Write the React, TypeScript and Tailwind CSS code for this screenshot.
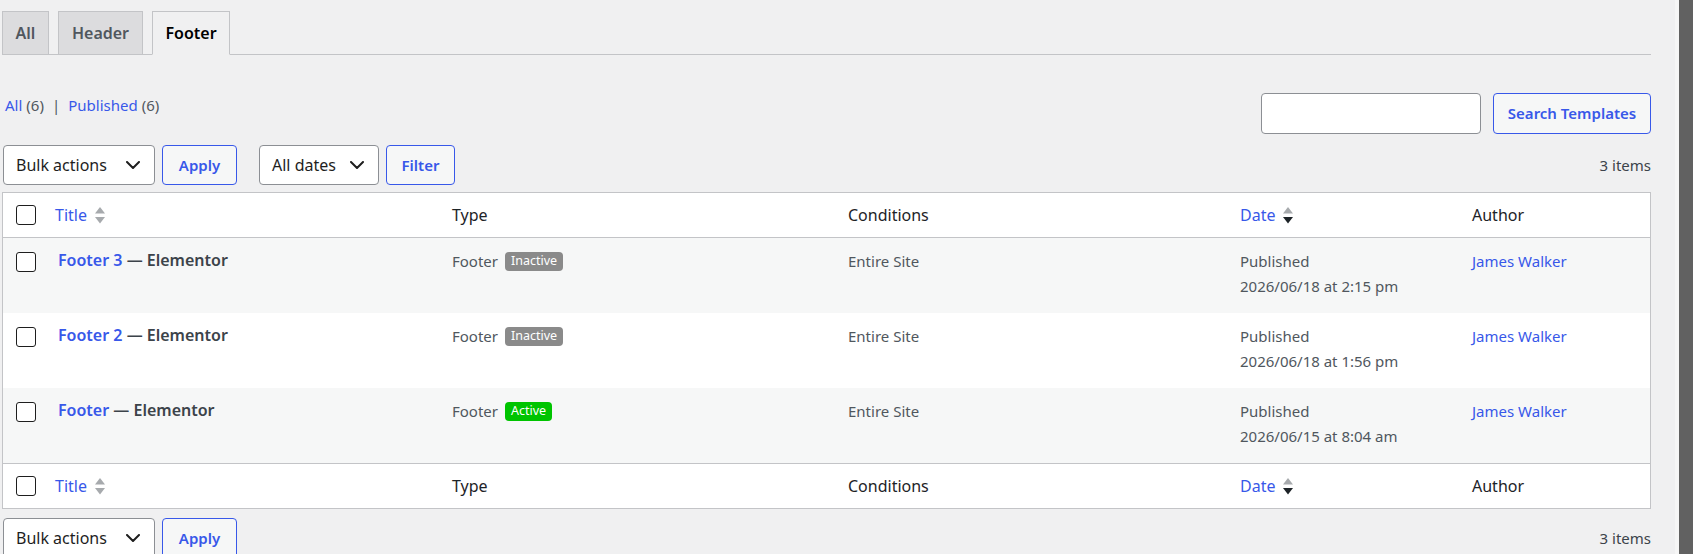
import React from "react";

type Row = {
  title: string;
  active: boolean;
  date: string;
  shaded: boolean;
};

const ROWS: Row[] = [
  { title: "Footer 3", active: false, date: "2026/06/18 at 2:15 pm", shaded: true },
  { title: "Footer 2", active: false, date: "2026/06/18 at 1:56 pm", shaded: false },
  { title: "Footer", active: true, date: "2026/06/15 at 8:04 am", shaded: true },
];

const COLS = "grid grid-cols-[41px_397px_396px_392px_232px_1fr]";

function Checkbox() {
  return <span className="block h-[20px] w-[20px] rounded-[3px] border border-[#1e1e1e] bg-white" />;
}

function SortArrows({ desc }: { desc?: boolean }) {
  return (
    <svg width="10" height="17" viewBox="0 0 10 17" className="ml-[8px]">
      <polygon points="5,0 10,6.5 0,6.5" fill="#a7aaad" />
      <polygon points="0,10 10,10 5,16.5" fill={desc ? "#1d2327" : "#a7aaad"} />
    </svg>
  );
}

function Chevron() {
  return (
    <svg width="14" height="8" viewBox="0 0 14 8" fill="none">
      <path d="M1 1l6 6 6-6" stroke="#1e1e1e" strokeWidth="2" strokeLinecap="round" strokeLinejoin="round" />
    </svg>
  );
}

function Select({ label, width }: { label: string; width: string }) {
  return (
    <div
      className={`flex h-[40px] ${width} items-center justify-between rounded-[4px] border border-[#8c8f94] bg-white pl-[12px] pr-[14px] text-[16px] text-[#1e1e1e]`}
    >
      <span>{label}</span>
      <Chevron />
    </div>
  );
}

function Button({ label, width }: { label: string; width: string }) {
  return (
    <div
      className={`flex h-[40px] ${width} items-center justify-center rounded-[4px] border border-[#3858e9] bg-[#f6f7f7] text-[15px] font-semibold text-[#3858e9]`}
    >
      {label}
    </div>
  );
}

function HeadRow({ top }: { top?: boolean }) {
  return (
    <div
      className={`${COLS} h-[45px] items-center text-[16px] text-[#1d2327] ${
        top ? "border-b" : "border-t"
      } border-[#c3c4c7]`}
    >
      <div className="pl-[13px]">
        <Checkbox />
      </div>
      <div className="flex items-center pl-[11px] text-[#3858e9]">
        Title
        <SortArrows />
      </div>
      <div className="pl-[11px]">Type</div>
      <div className="pl-[11px]">Conditions</div>
      <div className="flex items-center pl-[11px] text-[#3858e9]">
        Date
        <SortArrows desc />
      </div>
      <div className="pl-[11px]">Author</div>
    </div>
  );
}

function TemplateRow({ row }: { row: Row }) {
  return (
    <div
      className={`${COLS} h-[75px] items-start text-[15px] leading-[25px] text-[#50575e] ${
        row.shaded ? "bg-[#f6f7f7]" : "bg-white"
      }`}
    >
      <div className="pl-[13px] pt-[14px]">
        <Checkbox />
      </div>
      <div className="pl-[14px] pt-[10px] text-[16px] font-semibold text-[#3c434a]">
        <span className="text-[#3858e9]">{row.title}</span> — Elementor
      </div>
      <div className="flex items-center pl-[11px] pt-[11px]">
        <span>Footer</span>
        <span
          className={`ml-[7px] flex h-[19px] items-center rounded-[4px] px-[6px] text-[12.5px] leading-none text-white ${
            row.active ? "bg-[#00c400]" : "bg-[#8a8a8a]"
          }`}
        >
          {row.active ? "Active" : "Inactive"}
        </span>
      </div>
      <div className="pl-[11px] pt-[11px]">Entire Site</div>
      <div className="pl-[11px] pt-[11px]">
        <div>Published</div>
        <div>{row.date}</div>
      </div>
      <div className="pl-[11px] pt-[11px] text-[#3858e9]">James Walker</div>
    </div>
  );
}

export default function App() {
  return (
    <div className="flex h-[554px] w-full overflow-hidden bg-[#f0f0f1] font-['Noto_Sans','Open_Sans',sans-serif]">
      <div className="min-w-0 flex-1 pl-[2px] pr-[24px]">
        {/* tabs */}
        <div className="mt-[11px] flex h-[44px] items-end gap-[9px] border-b border-[#c3c4c7] text-[16px] font-semibold">
          <div className="-mb-px flex h-[44px] w-[47px] items-center justify-center border border-[#c3c4c7] bg-[#dcdcde] text-[#50575e]">
            All
          </div>
          <div className="-mb-px flex h-[44px] w-[85px] items-center justify-center border border-[#c3c4c7] bg-[#dcdcde] text-[#50575e]">
            Header
          </div>
          <div className="-mb-px flex h-[44px] w-[78px] items-center justify-center border border-[#c3c4c7] border-b-[#f0f0f1] bg-[#f0f0f1] text-black">
            Footer
          </div>
        </div>

        {/* views + search */}
        <div className="mt-[38px] flex items-start justify-between">
          <div className="mt-[1px] flex items-center pl-[3px] text-[15px] text-[#50575e]">
            <span className="text-[#3858e9]">All</span>
            <span className="ml-[4px]">(6)</span>
            <span className="mx-[8px] text-[#50575e]">|</span>
            <span className="text-[#3858e9]">Published</span>
            <span className="ml-[4px]">(6)</span>
          </div>
          <div className="flex gap-[12px]">
            <div className="h-[41px] w-[220px] rounded-[4px] border border-[#8c8f94] bg-white" />
            <div className="flex h-[41px] w-[158px] items-center justify-center rounded-[4px] border border-[#3858e9] bg-[#f6f7f7] text-[15px] font-semibold text-[#3858e9]">
              Search Templates
            </div>
          </div>
        </div>

        {/* top tablenav */}
        <div className="mt-[11px] flex items-center justify-between pl-[1px]">
          <div className="flex items-center">
            <Select label="Bulk actions" width="w-[152px]" />
            <div className="ml-[7px]">
              <Button label="Apply" width="w-[75px]" />
            </div>
            <div className="ml-[22px]">
              <Select label="All dates" width="w-[120px]" />
            </div>
            <div className="ml-[7px]">
              <Button label="Filter" width="w-[69px]" />
            </div>
          </div>
          <span className="text-[15px] text-[#3c434a]">3 items</span>
        </div>

        {/* table */}
        <div className="mt-[7px] border border-[#c3c4c7] bg-white">
          <HeadRow top />
          {ROWS.map((r) => (
            <TemplateRow key={r.title} row={r} />
          ))}
          <HeadRow />
        </div>

        {/* bottom tablenav */}
        <div className="mt-[9px] flex items-center justify-between pl-[1px]">
          <div className="flex items-center">
            <Select label="Bulk actions" width="w-[152px]" />
            <div className="ml-[7px]">
              <Button label="Apply" width="w-[75px]" />
            </div>
          </div>
          <span className="text-[15px] text-[#3c434a]">3 items</span>
        </div>
      </div>
      <div className="w-[4px] bg-[#f6f6f6]" />
      <div className="w-[14px] bg-[#616161]" />
    </div>
  );
}
